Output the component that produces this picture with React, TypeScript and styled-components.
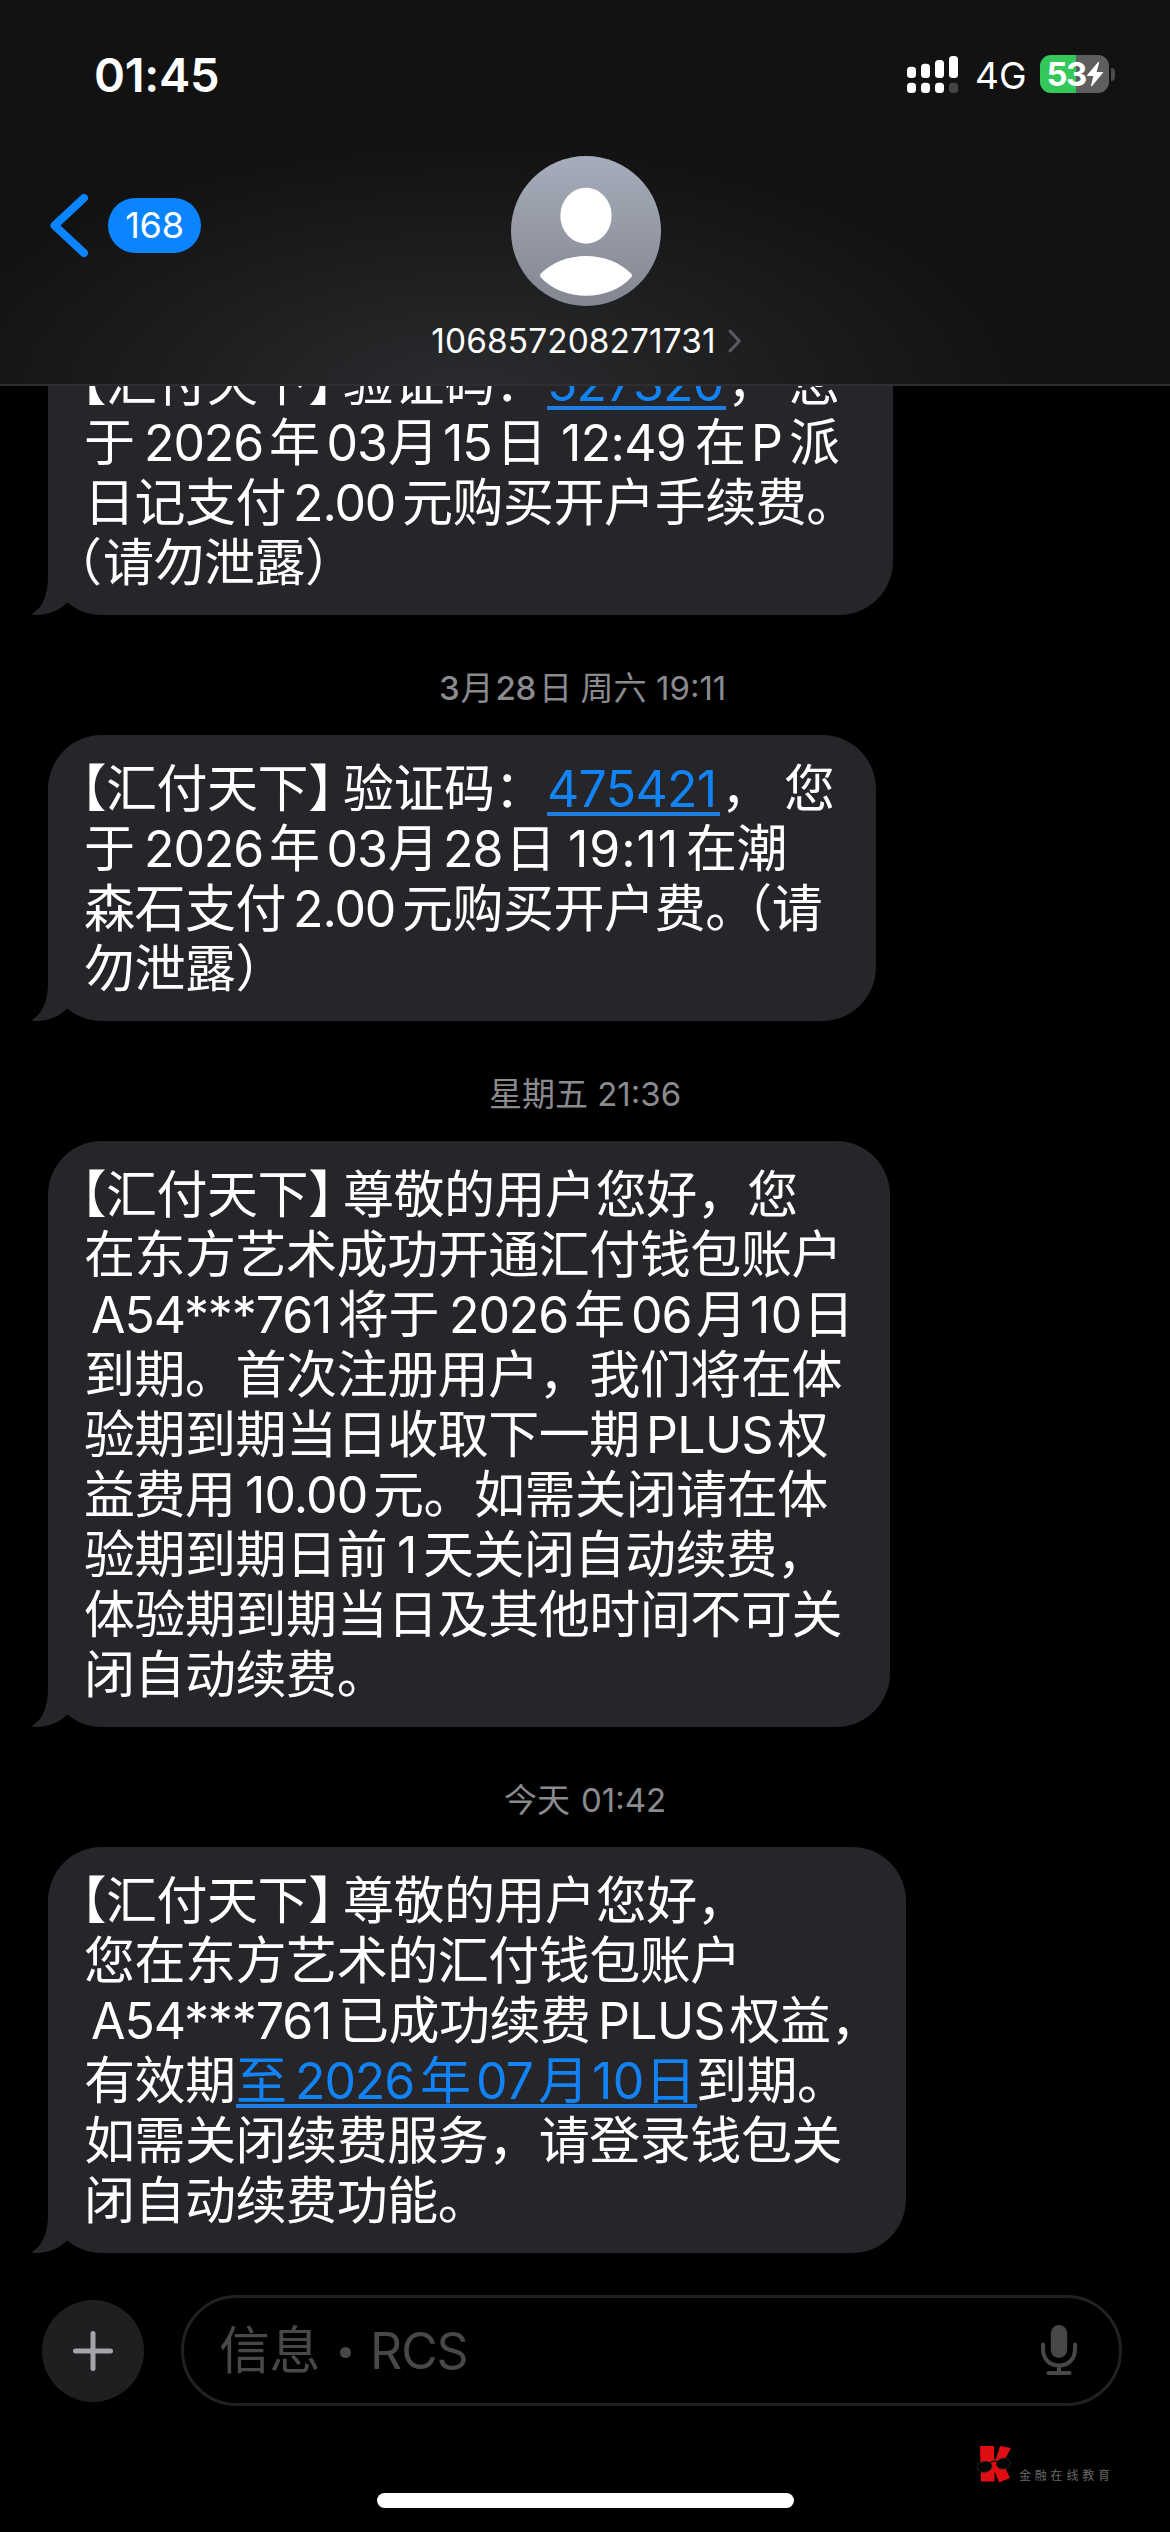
import React from "react";
import styled, { createGlobalStyle } from "styled-components";

const Global = createGlobalStyle`
  html, body { margin: 0; background: #000; }
  * { box-sizing: border-box; }
`;

const sans = `Inter, "Noto Sans CJK SC", "Liberation Sans", sans-serif`;

const Screen = styled.main`
  width: 1170px;
  height: 2532px;
  display: flex;
  flex-direction: column;
  overflow: hidden;
  background: #000;
  color: #fff;
  font-family: ${sans};
  text-spacing-trim: space-all;
`;

/* ---------- header ---------- */

const Header = styled.header`
  flex: none;
  height: 386px;
  display: flex;
  flex-direction: column;
  border-bottom: 2px solid #2e2e31;
  background:
    radial-gradient(ellipse 560px 260px at 470px 400px, rgba(44, 46, 49, 0.95), rgba(44, 46, 49, 0.45) 50%, rgba(44, 46, 49, 0) 100%),
    #121212;
`;

const StatusBar = styled.div`
  height: 150px;
  display: flex;
  justify-content: space-between;
  padding: 0 55px 0 94px;
`;

const Clock = styled.time`
  padding-top: 46px;
  font-size: 47px;
  line-height: 57px;
  font-weight: 600;
  letter-spacing: -0.3px;
`;

const StatusIcons = styled.div`
  display: flex;
  align-items: flex-start;
  padding-top: 55px;
`;

const SignalIcon = styled.svg`
  width: 52px;
  height: 38px;
`;

const Network = styled.span`
  width: 81px;
  padding-left: 16px;
  font-size: 37px;
  line-height: 42px;
  white-space: nowrap;
`;

const Battery = styled.div`
  width: 69px;
  height: 38px;
  display: flex;
  align-items: center;
  justify-content: center;
  gap: 1px;
  padding-left: 2px;
  border-radius: 11px;
  background: linear-gradient(90deg, #34c759 36px, #5e5e5f 36px);
  font-size: 33px;
  line-height: 38px;
  font-weight: 700;
  letter-spacing: -1.8px;
`;

const BoltIcon = styled.svg`
  width: 18px;
  height: 26px;
`;

const BatteryCap = styled.div`
  width: 4px;
  height: 13px;
  margin: 13px 0 0 2px;
  border-radius: 0 5px 5px 0;
  background: #4b4b4c;
`;

const NavBar = styled.div`
  flex: 1;
  display: grid;
  grid-template-columns: 1fr 340px 1fr;
`;

const BackButton = styled.div`
  display: flex;
  align-items: center;
  align-self: start;
  gap: 19px;
  padding-left: 49px;
  margin-top: 43px;
`;

const BackIcon = styled.svg`
  width: 40px;
  height: 65px;
`;

const UnreadBadge = styled.span`
  width: 93px;
  height: 55px;
  border-radius: 28px;
  background: #0a84ff;
  text-align: center;
  font-size: 36px;
  line-height: 55px;
  letter-spacing: -0.2px;
`;

const Contact = styled.div`
  display: flex;
  flex-direction: column;
  align-items: center;
  padding-top: 6px;
  padding-left: 2px;
`;

const AvatarIcon = styled.svg`
  width: 150px;
  height: 150px;
`;

const ContactName = styled.div`
  display: flex;
  align-items: center;
  gap: 12px;
  height: 40px;
  margin-top: 15px;
  font-size: 33.4px;
  line-height: 40px;
  letter-spacing: 0.12px;
`;

const DisclosureIcon = styled.svg`
  width: 13px;
  height: 24px;
`;

/* ---------- thread ---------- */

const Thread = styled.section`
  flex: none;
  height: 1867px;
  display: flex;
  flex-direction: column;
  justify-content: flex-end;
  align-items: flex-start;
  padding-left: 48px;
  overflow: hidden;
`;

const Bubble = styled.article<{ $width: number }>`
  position: relative;
  flex: none;
  width: ${(p) => p.$width}px;
  padding: 24px 0 22px 36px;
  border-radius: 54px;
  background: #26252a;
`;

const TailIcon = styled.svg`
  position: absolute;
  left: -16px;
  bottom: 0;
  width: 36px;
  height: 56px;
`;

const Line = styled.div`
  display: flex;
  align-items: baseline;
  height: 60px;
  line-height: 60px;
  white-space: pre;
`;

type RunProps = {
  $latin?: boolean;
  $width?: number;
  $shift?: number;
  $track?: number;
  $half?: boolean;
  $indent?: number;
};

const Run = styled.span<RunProps>`
  flex: none;
  font-size: ${(p) => (p.$latin ? 50 : 51)}px;
  letter-spacing: ${(p) => p.$track ?? (p.$latin ? -1.1 : -0.47)}px;
  width: ${(p) => (p.$width ? `${p.$width}px` : "auto")};
  margin-left: ${(p) => p.$shift ?? 0}px;
  padding-left: ${(p) => p.$indent ?? 0}px;
  font-feature-settings: ${(p) => (p.$half ? '"halt"' : "normal")};
`;

const LinkText = styled.span`
  display: flex;
  align-items: baseline;
  color: #1283f5;
  background: linear-gradient(#1d7fe4, #1d7fe4) 0 53px / 100% 4px no-repeat;
`;

const Stamp = styled.div`
  flex: none;
  align-self: stretch;
  display: flex;
  align-items: baseline;
  justify-content: center;
  height: 120px;
  margin-left: -48px;
  padding-top: 53px;
  color: #8a8a8f;
  font-size: 33px;
  line-height: 40px;
  white-space: pre;
`;

const StampPart = styled.span<{ $width?: number; $medium?: boolean }>`
  flex: none;
  width: ${(p) => (p.$width ? `${p.$width}px` : "auto")};
  font-weight: ${(p) => (p.$medium ? 500 : 400)};
  letter-spacing: ${(p) => (p.$medium ? -0.4 : 0)}px;
`;

/* ---------- composer ---------- */

const Composer = styled.footer`
  flex: 1;
  display: flex;
  flex-direction: column;
`;

const InputRow = styled.div`
  display: flex;
  align-items: center;
  gap: 37px;
  height: 111px;
  margin-top: 42px;
  padding: 0 48px 0 42px;
`;

const PlusButton = styled.div`
  display: flex;
  align-items: center;
  justify-content: center;
  width: 102px;
  height: 102px;
  border-radius: 50%;
  background: #1f1f21;
`;

const PlusIcon = styled.svg`
  width: 40px;
  height: 40px;
`;

const Field = styled.div`
  flex: 1;
  display: flex;
  align-items: center;
  justify-content: space-between;
  height: 111px;
  padding: 0 42px 0 35px;
  border: 3px solid #212123;
  border-radius: 56px;
`;

const Placeholder = styled.div`
  display: flex;
  align-items: baseline;
  line-height: 60px;
  color: #48484a;
`;

const Dot = styled.span`
  width: 11px;
  height: 11px;
  margin: 4px 19px 0 20px;
  align-self: center;
  border-radius: 50%;
  background: #48484a;
`;

const MicIcon = styled.svg`
  width: 36px;
  height: 51px;
`;

const BrandRow = styled.div`
  display: flex;
  align-items: flex-end;
  justify-content: flex-end;
  gap: 7px;
  height: 78px;
  padding-right: 56px;
`;

const BrandIcon = styled.svg`
  width: 38px;
  height: 40px;
`;

const BrandName = styled.span`
  width: 95px;
  font-size: 12px;
  line-height: 16px;
  letter-spacing: 3.8px;
  white-space: nowrap;
  color: #686868;
`;

const HomeIndicator = styled.div`
  width: 417px;
  height: 15px;
  margin: 9px auto 0;
  border-radius: 8px;
  background: #fff;
`;

function Tail() {
  return (
    <TailIcon viewBox="0 0 36 56">
      <path d="M16 0V18C16 36 10 49 0.6 54.2C0 54.8 0.2 55.6 1.2 55.8C14 57 27 52 35 43.5L36 0Z" fill="#26252a" />
    </TailIcon>
  );
}

function Sender() {
  return <Run $shift={-28.5} $width={287.5}>【汇付天下】</Run>;
}

export default function App() {
  return (
    <Screen lang="zh-CN">
      <Global />
      <Header>
        <StatusBar>
          <Clock>01:45</Clock>
          <StatusIcons>
            <SignalIcon viewBox="0 0 52 38">
              <g fill="#fff">
                <rect x="0" y="11.7" width="9" height="11.3" rx="3.5" />
                <rect x="14" y="8.7" width="9" height="14.3" rx="3.5" />
                <rect x="28" y="5" width="9" height="18" rx="3.5" />
                <rect x="42" y="1" width="9" height="22" rx="3.5" />
                <rect x="0" y="27.7" width="9" height="10.3" rx="3.5" />
                <rect x="14" y="27.7" width="9" height="10.3" rx="3.5" />
                <rect x="28" y="27.7" width="9" height="10.3" rx="3.5" />
              </g>
              <rect x="42" y="27.7" width="9" height="10.3" rx="3.5" fill="#444445" />
            </SignalIcon>
            <Network>4G</Network>
            <Battery>
              53
              <BoltIcon viewBox="0 0 18 26">
                <path d="M12.2 1L1 14.2Q0.6 15 1.4 15H7.4L5 24.6Q5.2 25.6 6 25L17 11.8Q17.4 11 16.6 11H10.6L13.2 1.4Q13 0.6 12.2 1Z" fill="#fff" />
              </BoltIcon>
            </Battery>
            <BatteryCap />
          </StatusIcons>
        </StatusBar>
        <NavBar>
          <BackButton>
            <BackIcon viewBox="0 0 40 65">
              <path d="M35 5L5.5 32.5L35 60" fill="none" stroke="#0a84ff" strokeWidth="8" strokeLinecap="round" strokeLinejoin="round" />
            </BackIcon>
            <UnreadBadge>168</UnreadBadge>
          </BackButton>
          <Contact>
            <AvatarIcon viewBox="0 0 150 150">
              <defs>
                <linearGradient id="avatar" x1="0" y1="0" x2="0" y2="1">
                  <stop offset="0" stopColor="#a7adbb" />
                  <stop offset="1" stopColor="#838690" />
                </linearGradient>
              </defs>
              <circle cx="75" cy="75" r="75" fill="url(#avatar)" />
              <ellipse cx="75" cy="59.7" rx="25.7" ry="28" fill="#fff" />
              <path d="M29.5 118Q28.4 119.6 29.5 121C41 133.5 57 139.7 75 139.7S109 133.5 120.5 121Q121.6 119.6 120.5 118C109 106 92 100 75 100S41 106 29.5 118Z" fill="#fff" />
            </AvatarIcon>
            <ContactName>
              106857208271731
              <DisclosureIcon viewBox="0 0 13 24">
                <path d="M2 2L11.3 12L2 22" fill="none" stroke="#5b5b60" strokeWidth="3" strokeLinecap="round" strokeLinejoin="round" />
              </DisclosureIcon>
            </ContactName>
          </Contact>
        </NavBar>
      </Header>

      <Thread>
        <Bubble $width={845}>
          <Line>
            <Sender />
            <Run $width={204}>验证码：</Run>
            <LinkText><Run $latin $width={179} $track={-0.8}>527320</Run></LinkText>
            <Run $width={63} $indent={1}>，</Run>
            <Run>您</Run>
          </Line>
          <Line>
            <Run $width={60}>于</Run>
            <Run $latin $width={125}>2026</Run>
            <Run $width={57.5}>年</Run>
            <Run $latin $width={61.5}>03</Run>
            <Run $width={55}>月</Run>
            <Run $latin $width={53}>15</Run>
            <Run $width={65}>日</Run>
            <Run $latin $width={134} $track={-0.7}>12:49</Run>
            <Run $width={56}>在</Run>
            <Run $latin $width={38}>P</Run>
            <Run>派</Run>
          </Line>
          <Line>
            <Run $width={209}>日记支付</Run>
            <Run $latin $width={109}>2.00</Run>
            <Run>元购买开户手续费。</Run>
          </Line>
          <Line>
            <Run $shift={-33} $width={52}>（</Run>
            <Run>请勿泄露）</Run>
          </Line>
          <Tail />
        </Bubble>

        <Stamp>
          <StampPart $medium $width={21.5}>3</StampPart>
          <StampPart $width={35}>月</StampPart>
          <StampPart $medium $width={43.5}>28</StampPart>
          <StampPart $width={41.5}>日</StampPart>
          <StampPart $width={75.5}>周六</StampPart>
          <StampPart $width={75}>19:11</StampPart>
        </Stamp>

        <Bubble $width={828}>
          <Line>
            <Sender />
            <Run $width={204}>验证码：</Run>
            <LinkText><Run $latin $width={173} $track={-0.7}>475421</Run></LinkText>
            <Run $width={64} $indent={1}>，</Run>
            <Run>您</Run>
          </Line>
          <Line>
            <Run $width={60}>于</Run>
            <Run $latin $width={125}>2026</Run>
            <Run $width={57.5}>年</Run>
            <Run $latin $width={61.5}>03</Run>
            <Run $width={55}>月</Run>
            <Run $latin $width={62}>28</Run>
            <Run $width={63}>日</Run>
            <Run $latin $width={118} $track={0.9}>19:11</Run>
            <Run>在潮</Run>
          </Line>
          <Line>
            <Run $width={209}>森石支付</Run>
            <Run $latin $width={109}>2.00</Run>
            <Run>元购买开户费</Run>
            <Run $half $width={41.5}>。</Run>
            <Run $half>（</Run>
            <Run>请</Run>
          </Line>
          <Line>
            <Run>勿泄露）</Run>
          </Line>
          <Tail />
        </Bubble>

        <Stamp>
          <StampPart>星期五 </StampPart>
          <StampPart>21:36</StampPart>
        </Stamp>

        <Bubble $width={842}>
          <Line>
            <Sender />
            <Run>尊敬的用户您好，您</Run>
          </Line>
          <Line><Run>在东方艺术成功开通汇付钱包账户</Run></Line>
          <Line>
            <Run $latin $shift={7} $width={247}>A54***761</Run>
            <Run $width={111}>将于</Run>
            <Run $latin $width={125}>2026</Run>
            <Run $width={57}>年</Run>
            <Run $latin $width={65}>06</Run>
            <Run $width={54}>月</Run>
            <Run $latin $width={53} $track={0.4}>10</Run>
            <Run>日</Run>
          </Line>
          <Line><Run>到期。首次注册用户，我们将在体</Run></Line>
          <Line>
            <Run $width={562}>验期到期当日收取下一期</Run>
            <Run $latin $width={131.5} $track={-0.6}>PLUS</Run>
            <Run>权</Run>
          </Line>
          <Line>
            <Run $width={161}>益费用</Run>
            <Run $latin $width={128} $track={-0.9}>10.00</Run>
            <Run>元。如需关闭请在体</Run>
          </Line>
          <Line>
            <Run $width={313}>验期到期日前</Run>
            <Run $latin $width={26}>1</Run>
            <Run>天关闭自动续费，</Run>
          </Line>
          <Line><Run>体验期到期当日及其他时间不可关</Run></Line>
          <Line><Run>闭自动续费。</Run></Line>
          <Tail />
        </Bubble>

        <Stamp>
          <StampPart $width={77}>今天</StampPart>
          <StampPart>01:42</StampPart>
        </Stamp>

        <Bubble $width={858}>
          <Line>
            <Sender />
            <Run>尊敬的用户您好，</Run>
          </Line>
          <Line><Run>您在东方艺术的汇付钱包账户</Run></Line>
          <Line>
            <Run $latin $shift={7} $width={247}>A54***761</Run>
            <Run $width={260}>已成功续费</Run>
            <Run $latin $width={131.5} $track={-0.6}>PLUS</Run>
            <Run>权益，</Run>
          </Line>
          <Line>
            <Run $width={152}>有效期</Run>
            <LinkText>
              <Run $width={59}>至</Run>
              <Run $latin $width={125}>2026</Run>
              <Run $width={56}>年</Run>
              <Run $latin $width={62}>07</Run>
              <Run $width={54}>月</Run>
              <Run $latin $width={53} $track={0.4}>10</Run>
              <Run $width={52}>日</Run>
            </LinkText>
            <Run $shift={-1}>到期。</Run>
          </Line>
          <Line><Run>如需关闭续费服务，请登录钱包关</Run></Line>
          <Line><Run>闭自动续费功能。</Run></Line>
          <Tail />
        </Bubble>
      </Thread>

      <Composer>
        <InputRow>
          <PlusButton>
            <PlusIcon viewBox="0 0 40 40">
              <path d="M20 2.5V37.5M2.5 20H37.5" stroke="#a5a5a9" strokeWidth="5" strokeLinecap="round" />
            </PlusIcon>
          </PlusButton>
          <Field>
            <Placeholder>
              <Run>信息</Run>
              <Dot />
              <Run $latin>RCS</Run>
            </Placeholder>
            <MicIcon viewBox="0 0 36 51">
              <rect x="9.8" y="0" width="16.4" height="33" rx="8.2" fill="#48484a" />
              <path d="M2 19.5V24C2 34 8.5 40.5 18 40.5S34 34 34 24V19.5M18 40.5V48M7.5 48H28.5" fill="none" stroke="#48484a" strokeWidth="4" strokeLinecap="round" />
            </MicIcon>
          </Field>
        </InputRow>
        <BrandRow>
          <BrandIcon viewBox="0 0 38 40">
            <path d="M6 2H20V15L22 15L26 2L37 4L29 19L36 34L25 38.5L20.5 27V37.5H7L6 2Z" fill="#e00d12" />
            <g fill="#050505" stroke="#2b2b22" strokeWidth="0.8">
              <ellipse cx="10.5" cy="22.8" rx="7.6" ry="5.4" transform="rotate(-10 10.5 22.8)" />
              <ellipse cx="29.5" cy="19.6" rx="7.2" ry="5.4" transform="rotate(-10 29.5 19.6)" />
            </g>
            <path d="M16 19Q20 16 23 17.5" fill="none" stroke="#111" strokeWidth="1.4" />
          </BrandIcon>
          <BrandName>金融在线教育</BrandName>
        </BrandRow>
        <HomeIndicator />
      </Composer>
    </Screen>
  );
}
